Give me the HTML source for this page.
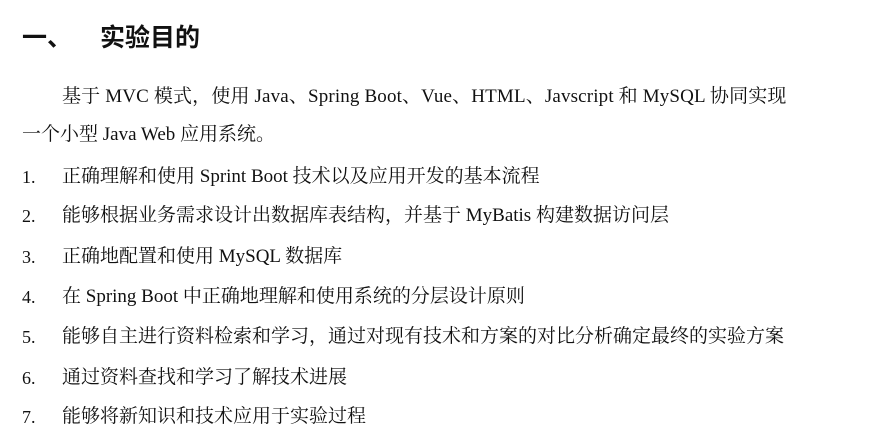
<!DOCTYPE html>
<html><head><meta charset="utf-8"><style>
body{margin:0;background:#fff;width:871px;height:444px;overflow:hidden;position:relative;font-family:"Liberation Serif","Noto Serif CJK SC",serif;color:#111;}
.t{position:absolute;white-space:nowrap;font-size:19px;line-height:22px;}
h1{position:absolute;margin:0;left:22px;top:18px;font-size:25px;font-weight:bold;font-family:"Liberation Sans","Noto Sans CJK SC",sans-serif;white-space:nowrap;}
.n{position:absolute;left:22px;font-size:18px;line-height:22px;}
</style></head><body>
<h1>一、<span style="margin-left:28px">实验目的</span></h1>
<div class="t" style="left:62px;top:86px;letter-spacing:0.15px">基于 MVC 模式，使用 Java、Spring Boot、Vue、HTML、Javscript 和 MySQL 协同实现</div>
<div class="t" style="left:22px;top:124px">一个小型 Java Web 应用系统。</div>
<div class="n" style="top:166px">1.</div><div class="t" style="left:62px;top:166px">正确理解和使用 Sprint Boot 技术以及应用开发的基本流程</div>
<div class="n" style="top:205px">2.</div><div class="t" style="left:62px;top:205px">能够根据业务需求设计出数据库表结构，并基于 MyBatis 构建数据访问层</div>
<div class="n" style="top:246px">3.</div><div class="t" style="left:62px;top:246px">正确地配置和使用 MySQL 数据库</div>
<div class="n" style="top:286px">4.</div><div class="t" style="left:62px;top:286px">在 Spring Boot 中正确地理解和使用系统的分层设计原则</div>
<div class="n" style="top:326px">5.</div><div class="t" style="left:62px;top:326px">能够自主进行资料检索和学习，通过对现有技术和方案的对比分析确定最终的实验方案</div>
<div class="n" style="top:367px">6.</div><div class="t" style="left:62px;top:367px">通过资料查找和学习了解技术进展</div>
<div class="n" style="top:406px">7.</div><div class="t" style="left:62px;top:406px">能够将新知识和技术应用于实验过程</div>
</body></html>
